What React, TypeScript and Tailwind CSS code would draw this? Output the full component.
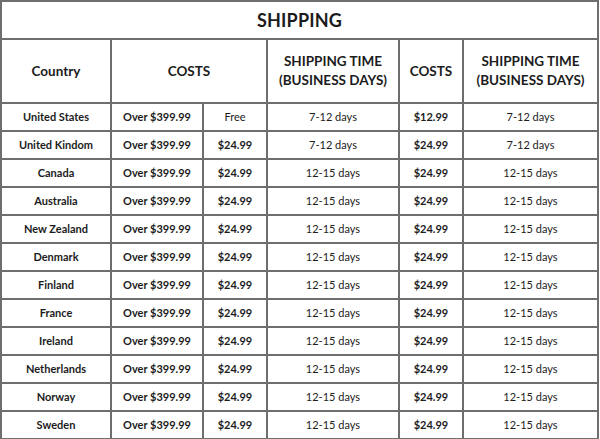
import React from 'react';

const rows: [string, string, string, string, string][] = [
  ['United States', 'Free', '7-12 days', '$12.99', '7-12 days'],
  ['United Kindom', '$24.99', '7-12 days', '$24.99', '7-12 days'],
  ['Canada', '$24.99', '12-15 days', '$24.99', '12-15 days'],
  ['Australia', '$24.99', '12-15 days', '$24.99', '12-15 days'],
  ['New Zealand', '$24.99', '12-15 days', '$24.99', '12-15 days'],
  ['Denmark', '$24.99', '12-15 days', '$24.99', '12-15 days'],
  ['Finland', '$24.99', '12-15 days', '$24.99', '12-15 days'],
  ['France', '$24.99', '12-15 days', '$24.99', '12-15 days'],
  ['Ireland', '$24.99', '12-15 days', '$24.99', '12-15 days'],
  ['Netherlands', '$24.99', '12-15 days', '$24.99', '12-15 days'],
  ['Norway', '$24.99', '12-15 days', '$24.99', '12-15 days'],
  ['Sweden', '$24.99', '12-15 days', '$24.99', '12-15 days'],
];

const cell = 'border-2 border-[#6e6e6e] text-center align-middle p-0';

const App: React.FC = () => {
  return (
    <div className="w-[600px] h-[439px] bg-white overflow-hidden text-[#1c1c1c]" style={{ fontFamily: 'Lato, "Open Sans", sans-serif' }}>
      <table className="w-[599px] table-fixed border-collapse border-2 border-[#6e6e6e]">
        <colgroup>
          <col className="w-[110px]" />
          <col className="w-[92px]" />
          <col className="w-[64px]" />
          <col className="w-[132px]" />
          <col className="w-[64px]" />
          <col />
        </colgroup>
        <thead>
          <tr className="h-[38px]">
            <th colSpan={6} className={`${cell} text-[18px] font-bold tracking-[0.2px]`}>SHIPPING</th>
          </tr>
          <tr className="h-[64px] text-[13.5px] font-bold">
            <th className={cell}>Country</th>
            <th colSpan={2} className={cell}>COSTS</th>
            <th className={`${cell} leading-[19px]`}>SHIPPING TIME<br />(BUSINESS DAYS)</th>
            <th className={cell}>COSTS</th>
            <th className={`${cell} leading-[19px]`}>SHIPPING TIME<br />(BUSINESS DAYS)</th>
          </tr>
        </thead>
        <tbody className="text-[11px]">
          {rows.map(([country, cost, time, cost2, time2]) => (
            <tr key={country} className="h-[28px]">
              <td className={`${cell} font-bold`}>{country}</td>
              <td className={`${cell} font-bold`}>Over $399.99</td>
              <td className={`${cell} ${cost === 'Free' ? 'font-normal' : 'font-bold'}`}>{cost}</td>
              <td className={cell}>{time}</td>
              <td className={`${cell} font-bold`}>{cost2}</td>
              <td className={cell}>{time2}</td>
            </tr>
          ))}
        </tbody>
      </table>
    </div>
  );
};

export default App;
